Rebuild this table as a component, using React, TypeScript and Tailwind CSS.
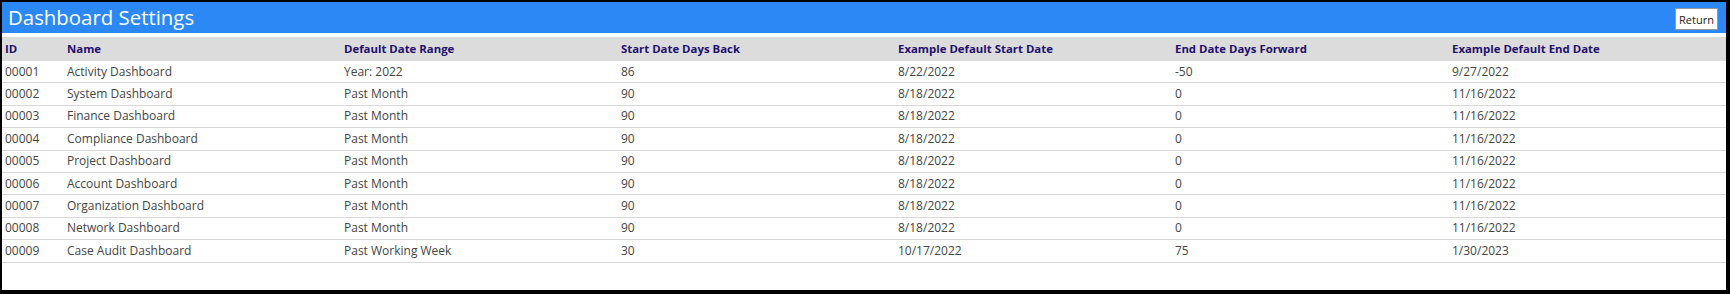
import React from "react";

const rows = [
  ["00001", "Activity Dashboard", "Year: 2022", "86", "8/22/2022", "-50", "9/27/2022"],
  ["00002", "System Dashboard", "Past Month", "90", "8/18/2022", "0", "11/16/2022"],
  ["00003", "Finance Dashboard", "Past Month", "90", "8/18/2022", "0", "11/16/2022"],
  ["00004", "Compliance Dashboard", "Past Month", "90", "8/18/2022", "0", "11/16/2022"],
  ["00005", "Project Dashboard", "Past Month", "90", "8/18/2022", "0", "11/16/2022"],
  ["00006", "Account Dashboard", "Past Month", "90", "8/18/2022", "0", "11/16/2022"],
  ["00007", "Organization Dashboard", "Past Month", "90", "8/18/2022", "0", "11/16/2022"],
  ["00008", "Network Dashboard", "Past Month", "90", "8/18/2022", "0", "11/16/2022"],
  ["00009", "Case Audit Dashboard", "Past Working Week", "30", "10/17/2022", "75", "1/30/2023"],
];

const headers = [
  "ID",
  "Name",
  "Default Date Range",
  "Start Date Days Back",
  "Example Default Start Date",
  "End Date Days Forward",
  "Example Default End Date",
];

const cols = "grid grid-cols-[62px_277px_277px_277px_277px_277px_1fr]";

export default function App() {
  return (
    <div className="w-[1730px] h-[294px] bg-black pt-[2px] pl-[2px] pr-[4px] pb-[4px] box-border" style={{ fontFamily: '"Open Sans", sans-serif' }}>
      <div className="w-full h-full bg-white flex flex-col">
        <div className="h-[31px] bg-[#2b88f5] flex items-center justify-between pl-[6px] pr-[8px]">
          <span className="text-white text-[20.4px] leading-none">Dashboard Settings</span>
          <button className="h-[22px] w-[43px] mt-[3px] bg-white border border-[#9a9a9a] text-[11px] text-[#222] leading-none flex items-center justify-center">
            Return
          </button>
        </div>
        <div className="h-[4px]" />
        <div className={`${cols} h-[24px] bg-[#dcdcdc] items-center`}>
          {headers.map((h) => (
            <div key={h} className="px-[3px] text-[11.4px] font-bold text-[#220f6e] whitespace-nowrap">
              {h}
            </div>
          ))}
        </div>
        {rows.map((r) => (
          <div key={r[0]} className={`${cols} h-[22.4px] border-b border-[#d8d8d8] items-center box-border`}>
            {r.map((c, i) => (
              <div key={i} className="px-[3px] text-[12px] text-[#444] whitespace-nowrap">
                {c}
              </div>
            ))}
          </div>
        ))}
      </div>
    </div>
  );
}
